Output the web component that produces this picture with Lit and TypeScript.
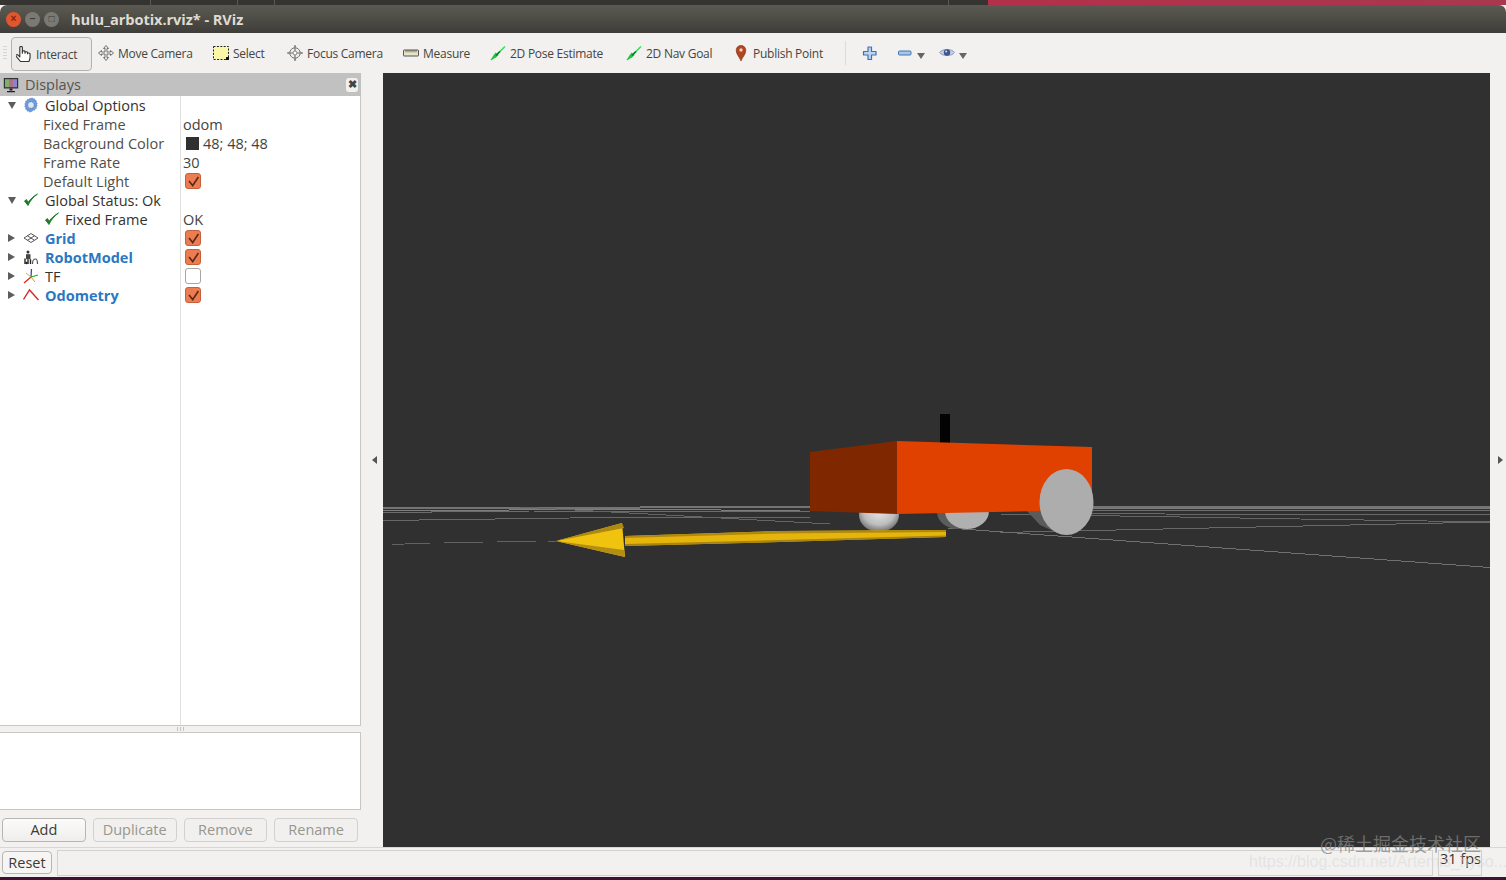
import { LitElement, html, css, svg } from "lit";
import { customElement } from "lit/decorators.js";

const ic = (body: unknown, size = 16) =>
  html`<svg class="ic" width=${size} height=${size} viewBox="0 0 16 16">${body}</svg>`;

const icons: Record<string, unknown> = {
  hand: svg`<g transform="translate(-1 -.5) scale(1.15 1.03)"><path d="M4.800 15.500 1 10.600c-.8-1.200.6-2.300 1.600-1.300L4.200 11V2c0-1.500 2.200-1.500 2.200 0V7.500 6c0-1.200 2.300-1.200 2.300 0V7.500 6.800c0-1.100 2.200-1.100 2.200 0V8c0-1 2.200-1 2.200.2V12l-.9 3.500z" fill="#fff" stroke="#333" stroke-width="1" stroke-linejoin="round"/></g>`,
  move: svg`<path d="M8 .5 10.500 3.500H9V7h3.500V5.500L15.500 8l-3 2.500V9H9v3.500h1.500L8 15.500l-2.500-3H7V9H3.500v1.500L.5 8l3-2.500V7H7V3.500H5.500z" fill="#e8e8e8" stroke="#666" stroke-width=".9" stroke-linejoin="round"/>`,
  select: svg`<rect x=".5" y="1.500" width="15" height="13" fill="#fbf7a6" stroke="#222" stroke-width="1" stroke-dasharray="2 1.400"/><rect x="13" y="12" width="3" height="3" fill="#111"/>`,
  focus: svg`<circle cx="8" cy="8" r="5.200" fill="#eee" stroke="#777"/><path d="M8 0v16M0 8h16" stroke="#777" stroke-width="1.200"/><path d="M8 .2 6.400 2.600h3.200zM8 15.800l-1.600-2.400h3.200zM.2 8l2.400-1.600v3.200zM15.800 8l-2.400-1.600v3.200z" fill="#888"/><circle cx="8" cy="8" r="2" fill="#fff" stroke="#888"/>`,
  measure: svg`<rect x=".5" y="5" width="15" height="6" rx=".5" fill="#e8e4c4" stroke="#555"/><path d="M3 5v2.400M5 5v2.400M7 5v2.400M9 5v2.400M11 5v2.400M13 5v2.400" stroke="#555" stroke-width=".8"/>`,
  goal: svg`<path d="M1 15 15 1.500" stroke="#2ce650" stroke-width="1.600"/><path d="M1 15 6 12.600 8.600 10 5.600 7.600 3 11z" fill="#1bc63c"/><path d="M6 10.500 10 6.500" stroke="#0b7a20" stroke-width="1.600"/>`,
  pin: svg`<path d="M8 16C6.600 12 3.200 9.400 3.200 5.200a4.800 4.800 0 0 1 9.600 0C12.800 9.400 9.400 12 8 16z" fill="#b0451f" stroke="#7d2e10" stroke-width=".6"/><circle cx="8" cy="5" r="1.700" fill="#f0d0c0"/>`,
  plus: svg`<path d="M6 2h3.500v4.500H14V10H9.500v4.500H6V10H1.500V6.500H6z" fill="#bcd4ee" stroke="#3a74b8" stroke-width="1.200" stroke-linejoin="round"/>`,
  minus: svg`<rect x="1.500" y="6" width="12.500" height="4" rx="1" fill="#a8c6e6" stroke="#3a74b8" stroke-width="1"/>`,
  eye: svg`<path d="M.5 7.500C3 3.500 13 3.500 15.500 7.500 13 11.500 3 11.500 .5 7.500z" fill="#c5cfe6" stroke="#8b9ac0"/><circle cx="8" cy="7.500" r="3.200" fill="#3f5590"/><circle cx="7.200" cy="6.600" r="1" fill="#d8e0f2"/>`,
  monitor: svg`<rect x=".8" y="1" width="14.400" height="10.500" fill="#333"/><rect x="2" y="2.200" width="4" height="8" fill="#7fb069"/><rect x="6" y="2.200" width="4" height="8" fill="#b0708a"/><rect x="10" y="2.200" width="4" height="8" fill="#8a84c8"/><path d="M6.500 11.500h3v2h-3zM4 14h8v1.200H4z" fill="#222"/>`,
  gear: svg`<path d="M8 1.500 9.200.8l.9 1.300 1.500-.3.3 1.500 1.500.5-.3 1.500 1.200 1-.8 1.200.8 1.200-1.200 1 .3 1.500-1.500.5-.3 1.500-1.500-.3-.9 1.300L8 14.500l-1.200.7-.9-1.300-1.500.3-.3-1.500-1.500-.5.3-1.500-1.200-1L2.500 8l-.8-1.200 1.200-1-.3-1.500 1.500-.5.3-1.500 1.500.3.900-1.300z" fill="#6f9bdc" stroke="#4b76bb" stroke-width=".5"/><circle cx="8" cy="8" r="3.300" fill="#dbe7f8" stroke="#4b76bb" stroke-dasharray="1.500 .8"/>`,
  check: svg`<path d="M1.500 9 5 13.500C7 8.800 10.500 4.800 14.500 2 10.600 4 7.200 7.300 5.100 10.300L3.500 7.600z" fill="#1a7a28" stroke="#1a7a28" stroke-width=".9" stroke-linejoin="round"/>`,
  grid: svg`<path d="M8 3.500 15 8l-7 4.500L1 8zM4.500 5.800l7 4.500M11.500 5.800l-7 4.500" fill="#fff" stroke="#444" stroke-width=".9"/>`,
  robot: svg`<circle cx="5" cy="3" r="1.500" fill="#333"/><rect x="3" y="5.200" width="4.500" height="5" fill="#444"/><path d="M2 15V9.500M5 15v-4.800M7.500 15v-4.800" stroke="#222" stroke-width="1.400"/><path d="M9.500 15c0-3 1-5 3-5s2 2.500 2 5" fill="none" stroke="#555" stroke-width="1.200"/><circle cx="3.500" cy="14" r="1.200" fill="#222"/>`,
  tf: svg`<path d="M8 9 8.500 1" stroke="#2a3fd8" stroke-width="1.200"/><path d="M8 9 15 7" stroke="#22b422" stroke-width="1.200"/><path d="M8 9 1 15" stroke="#e02020" stroke-width="1.200"/><path d="M8 9 3 5" stroke="#b8b020" stroke-width=".9"/><path d="M8 9 12 14" stroke="#c09020" stroke-width=".9"/>`,
  odom: svg`<path d="M.5 12.500 6.500 3 15.500 13" fill="none" stroke="#d42a22" stroke-width="1.400"/>`,
};

type Row = {
  label: string;
  kind: "top" | "prop" | "child";
  arrow?: "open" | "closed";
  icon?: string;
  blue?: boolean;
  value?: string;
  swatch?: boolean;
  box?: "on" | "off";
};

const rows: Row[] = [
  { label: "Global Options", kind: "top", arrow: "open", icon: "gear" },
  { label: "Fixed Frame", kind: "prop", value: "odom" },
  { label: "Background Color", kind: "prop", value: "48; 48; 48", swatch: true },
  { label: "Frame Rate", kind: "prop", value: "30" },
  { label: "Default Light", kind: "prop", box: "on" },
  { label: "Global Status: Ok", kind: "top", arrow: "open", icon: "check" },
  { label: "Fixed Frame", kind: "child", icon: "check", value: "OK" },
  { label: "Grid", kind: "top", arrow: "closed", icon: "grid", blue: true, box: "on" },
  { label: "RobotModel", kind: "top", arrow: "closed", icon: "robot", blue: true, box: "on" },
  { label: "TF", kind: "top", arrow: "closed", icon: "tf", box: "off" },
  { label: "Odometry", kind: "top", arrow: "closed", icon: "odom", blue: true, box: "on" },
];

const tools = [
  { label: "Move Camera", icon: "move", w: 115 },
  { label: "Select", icon: "select", w: 74 },
  { label: "Focus Camera", icon: "focus", w: 116 },
  { label: "Measure", icon: "measure", w: 87 },
  { label: "2D Pose Estimate", icon: "goal", w: 136 },
  { label: "2D Nav Goal", icon: "goal", w: 107 },
  { label: "Publish Point", icon: "pin", w: 112 },
];

@customElement("app-root")
export class AppRoot extends LitElement {
  static styles = css`
    :host {
      display: block;
      position: relative;
      width: 1506px;
      height: 880px;
      overflow: hidden;
      background: #f2f1f0;
      font-family: "Open Sans", "Noto Sans", "Liberation Sans", sans-serif;
      color: #3c3b37;
    }
    .ic { display: block; flex: none; }
    .app { display: flex; flex-direction: column; height: 880px; }

    .desk {
      height: 5px; flex: none;
      background:
        linear-gradient(#5a5954, #5a5954) 150px 0 / 1px 100% no-repeat,
        linear-gradient(#5a5954, #5a5954) 237px 0 / 1px 100% no-repeat,
        linear-gradient(#5a5954, #5a5954) 274px 0 / 1px 100% no-repeat,
        linear-gradient(#5a5954, #5a5954) 948px 0 / 1px 100% no-repeat,
        linear-gradient(90deg, #353431 0 988px, #b3304a 988px, #a8384f 100%);
    }
    .title {
      height: 28px; flex: none; display: flex; align-items: center; gap: 4px; padding-left: 6px;
      background: linear-gradient(#5b5a52, #3e3d39);
      border-radius: 7px 7px 0 0;
    }
    .dot { width: 15px; height: 15px; border-radius: 50%; background: #7a7974; display: grid; place-items: center; color: #3c3b37; font: 700 10px/1 "Liberation Sans", sans-serif; }
    .dot.close { background: #e2562e; color: #7a2510; }
    .wtitle { margin-left: 8px; font-weight: 700; font-size: 14.6px; color: #dfdbd2; letter-spacing: -.06px; }

    .toolbar { height: 40px; flex: none; display: flex; align-items: center; padding-left: 3px; font-size: 12px; letter-spacing: -.26px; color: #45453f; }
    .grip { width: 4px; height: 14px; margin-right: 4px; background: repeating-linear-gradient(#d5d4d2 0 1px, transparent 1px 3px); }
    .active { display: flex; align-items: center; gap: 4px; box-sizing: border-box; width: 81px; height: 34px; padding-left: 4px; margin-right: 6px; border: 1px solid #b4b2ae; border-radius: 4px; background: #ecebe9; position: relative; top: 1px; }
    .tool { display: flex; align-items: center; gap: 4px; flex: none; white-space: nowrap; }
    .sep { width: 1px; height: 24px; background: #dcdbd9; margin: 0 16px 0 0; flex: none; }
    .mini { display: flex; align-items: center; flex: none; }
    .drop { width: 0; height: 0; border: 4px solid transparent; border-top: 6px solid #666; border-bottom: 0; margin: 6px 0 0 4px; }

    .main { flex: 1; min-height: 0; display: flex; }
    .side { width: 361px; flex: none; display: flex; flex-direction: column; }
    .head { height: 23px; flex: none; display: flex; align-items: center; gap: 6px; padding-left: 3px; background: #c1c1c1; font-size: 14.5px; color: #55544f; }
    .head span { flex: 1; }
    .x { width: 12px; height: 14px; margin-right: 3px; background: #f2f1f0; border-radius: 3px; display: grid; place-items: center; font: 700 11px/1 "Liberation Sans", sans-serif; color: #444; }
    .tree { flex: 1; background: #fff; border: solid #c8c7c5; border-width: 0 1px 1px 0; position: relative; min-height: 0; }
    .colline { position: absolute; left: 180px; top: 0; bottom: 0; width: 1px; background: #e2e1df; }
    .row { height: 19px; box-sizing: border-box; padding-bottom: 1px; display: flex; align-items: center; font-size: 14.5px; position: relative; }
    .name { width: 181px; flex: none; display: flex; align-items: center; box-sizing: border-box; white-space: nowrap; color: #33322e; }
    .name.top { padding-left: 8px; }
    .name.prop { padding-left: 43px; color: #4f4e4a; }
    .name.child { padding-left: 44px; }
    .name.child .ic { margin-right: 5px; }
    .name.top .ic { margin: 0 6px 0 6px; }
    .name .blue { color: #2b78c2; font-weight: 700; }
    .tri { width: 9px; height: 9px; flex: none; }
    .tri.open { border-top: 7px solid #5d5d5a; border-left: 4px solid transparent; border-right: 4px solid transparent; width: 0; height: 0; margin-right: 1px; }
    .tri.closed { border-left: 7px solid #5d5d5a; border-top: 4px solid transparent; border-bottom: 4px solid transparent; width: 0; height: 0; margin-right: 2px; }
    .val { display: flex; align-items: center; gap: 4px; padding-left: 2px; color: #44433f; }
    .swatch { width: 13px; height: 13px; background: #303030; margin-left: 3px; }
    .box { width: 14px; height: 14px; margin-left: 2px; border: 1px solid #a8a6a2; border-radius: 3px; background: #fff; display: grid; place-items: center; }
    .box.on { background: #ec7c52; border-color: #c6603a; }
    .split { height: 6px; flex: none; display: flex; justify-content: center; align-items: center; }
    .split i { width: 8px; height: 4px; background: repeating-linear-gradient(90deg, #c4c3c0 0 1px, transparent 1px 3px); }
    .desc { height: 78px; flex: none; box-sizing: border-box; background: #fff; border: solid #c8c7c5; border-width: 1px 1px 1px 0; }
    .btns { height: 37px; flex: none; display: flex; gap: 7px; padding: 8px 3px 0 2px; box-sizing: border-box; }
    .btn { flex: 1; height: 24px; box-sizing: border-box; padding-bottom: 2px; display: grid; place-items: center; border: 1px solid #b8b6b2; border-radius: 4px; background: linear-gradient(#fbfbfa, #efeeec); font-size: 14.5px; color: #3c3b37; }
    .btn.off { color: #97968f; border-color: #d2d1ce; background: #f1f0ee; }
    .gutter { width: 22px; flex: none; display: flex; align-items: center; padding-left: 11px; box-sizing: border-box; }
    .left { width: 0; height: 0; border-right: 5px solid #555; border-top: 4px solid transparent; border-bottom: 4px solid transparent; }
    .right { width: 0; height: 0; border-left: 5px solid #555; border-top: 4px solid transparent; border-bottom: 4px solid transparent; }
    .view { flex: 1; background: #303030; min-width: 0; }
    .view svg { display: block; }
    .rstrip { width: 16px; flex: none; display: flex; align-items: center; justify-content: flex-end; padding-right: 3px; box-sizing: border-box; }

    .status { height: 30px; flex: none; display: flex; align-items: center; gap: 4px; padding-left: 2px; border-top: 1px solid #d8d7d4; box-sizing: border-box; font-size: 14.5px; }
    .reset { width: 50px; height: 23px; box-sizing: border-box; display: grid; place-items: center; border: 1px solid #b8b6b2; border-radius: 4px; background: #f6f5f4; }
    .field { height: 26px; box-sizing: border-box; border: 1px solid #d2d1ce; margin-left: 1px; }
    .field.grow { flex: 1; }
    .field.fps { width: 44px; margin-right: 24px; padding-left: 1px; white-space: nowrap; line-height: 15px; color: #33322e; }
    .strip { height: 3px; flex: none; background: #3d1233; }

    .wm1 { position: absolute; left: 1320px; top: 830px; font-family: "Noto Sans CJK SC", "Open Sans", sans-serif; font-size: 18px; color: rgba(130, 130, 130, .75); white-space: nowrap; }
    .wm2 { position: absolute; left: 1249px; top: 853px; font-family: "Liberation Sans", sans-serif; font-size: 16px; color: rgba(215, 215, 215, .55); white-space: nowrap; }
  `;

  scene() {
    return html`<svg width="1107" height="774" viewBox="383 73 1107 774">
      <defs>
        <radialGradient id="caster" cx=".5" cy=".4" r=".6">
          <stop offset="0" stop-color="#e6e6e6" />
          <stop offset=".65" stop-color="#bdbdbd" />
          <stop offset="1" stop-color="#6f6f6f" />
        </radialGradient>
      </defs>
      <g shape-rendering="crispEdges" fill="none" stroke-width="1">
        <path d="M383 507.500H640L1490 506.500" stroke="#747474" stroke-width="2" />
        <path d="M383 510.500 640 509.500 800 510.500" stroke="#7e7e7e" />
        <path d="M383 512.500 530 511 810 512" stroke="#6c6c6c" />
        <path d="M383 520.500 570 518 810 517" stroke="#686868" />
        <path d="M520 507 830 524" stroke="#646464" />
        <path d="M1090 508.500H1490" stroke="#7c7c7c" />
        <path d="M1090 511 1490 510" stroke="#6e6e6e" />
        <path d="M1090 513 1240 515 1490 514" stroke="#686868" />
        <path d="M1000 514 1300 519 1490 522" stroke="#666" />
        <path d="M1000 532.500 1490 522" stroke="#686868" />
        <path d="M948 528 1490 567.500" stroke="#707070" />
        <path d="M392 544.500 430 543 M444 543 484 542 M497 542 536 541.500 M548 541.500 556 541" stroke="#626262" />
      </g>

      <ellipse cx="879" cy="515" rx="20" ry="17" fill="url(#caster)" />
      <ellipse cx="958" cy="512" rx="21" ry="17" fill="#5c5c5c" />
      <ellipse cx="967" cy="511" rx="22" ry="18" fill="#b0b0b0" />
      <path d="M1027 511 1040 525 1060 534 1070 480 1040 500z" fill="#5b5b5b" />
      <polygon points="940,414 950,414 950,444 940,444" fill="#030303" />
      <polygon points="810,452 897,441 897,514 810,511" fill="#7f2800" />
      <polygon points="897,441 1092,447 1092,510 897,514" fill="#e04000" />
      <ellipse cx="1066.500" cy="502" rx="27" ry="33" fill="#adadad" />

      <polygon points="946,530 780,531 625,536 625,546 780,542 946,537" fill="#e5b50c" />
      <polygon points="946,530 780,531 625,536 625,538 780,533.500 946,532" fill="#b08a10" />
      <polygon points="946,535.500 780,540 625,544 625,546 780,542 946,537" fill="#a88410" />
      <polygon points="556,541 622,523 625,557" fill="#f0c30e" />
      <polygon points="556,541 622,523 624,528" fill="#ad8912" />
      <polygon points="556,541 625,557 624,550" fill="#b48e14" />
    </svg>`;
  }

  renderRow(r: Row) {
    return html`<div class="row">
      <div class="name ${r.kind}">
        ${r.arrow ? html`<span class="tri ${r.arrow}"></span>` : ""}
        ${r.icon ? ic(icons[r.icon]) : ""}
        <span class=${r.blue ? "blue" : ""}>${r.label}</span>
      </div>
      <div class="val">
        ${r.swatch ? html`<span class="swatch"></span>` : ""}
        ${r.value ?? ""}
        ${r.box
          ? html`<span class="box ${r.box}">
              ${r.box === "on"
                ? ic(svg`<path d="M2.500 7.500 7 13 14 2.500" fill="none" stroke="#5a2a18" stroke-width="2"/>`, 13)
                : ""}
            </span>`
          : ""}
      </div>
    </div>`;
  }

  render() {
    return html`<div class="app">
        <div class="desk"></div>
        <div class="title">
          <span class="dot close">×</span>
          <span class="dot">–</span>
          <span class="dot">□</span>
          <span class="wtitle">hulu_arbotix.rviz* - RViz</span>
        </div>
        <div class="toolbar">
          <span class="grip"></span>
          <div class="active">${ic(icons.hand)}<span>Interact</span></div>
          ${tools.map(
            (t) => html`<div class="tool" style="width:${t.w}px">${ic(icons[t.icon])}<span>${t.label}</span></div>`
          )}
          <span class="sep"></span>
          <div class="mini" style="width:35px">${ic(icons.plus)}</div>
          <div class="mini" style="width:42px">${ic(icons.minus)}<span class="drop"></span></div>
          <div class="mini">${ic(icons.eye)}<span class="drop"></span></div>
        </div>
        <div class="main">
          <div class="side">
            <div class="head">${ic(icons.monitor)}<span>Displays</span><i class="x">✖</i></div>
            <div class="tree">
              <div class="colline"></div>
              ${rows.map((r) => this.renderRow(r))}
            </div>
            <div class="split"><i></i></div>
            <div class="desc"></div>
            <div class="btns">
              <div class="btn">Add</div>
              <div class="btn off">Duplicate</div>
              <div class="btn off">Remove</div>
              <div class="btn off">Rename</div>
            </div>
          </div>
          <div class="gutter"><span class="left"></span></div>
          <div class="view">${this.scene()}</div>
          <div class="rstrip"><span class="right"></span></div>
        </div>
        <div class="status">
          <div class="reset">Reset</div>
          <div class="field grow"></div>
          <div class="field fps">31 fps</div>
        </div>
        <div class="strip"></div>
      </div>
      <div class="wm1">@稀土掘金技术社区</div>
      <div class="wm2">https://blog.csdn.net/Artemis_hyso...</div>`;
  }
}
